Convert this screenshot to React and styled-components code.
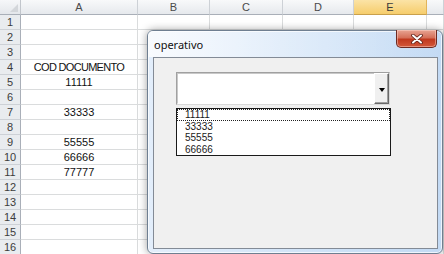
import React from "react";
import styled, { createGlobalStyle } from "styled-components";

const GlobalStyle = createGlobalStyle`
  html, body {
    margin: 0;
    padding: 0;
    background: #fff;
    overflow: hidden;
  }
  * { box-sizing: border-box; }
`;

const Page = styled.div`
  position: relative;
  width: 444px;
  height: 254px;
  overflow: hidden;
  font-family: "Liberation Sans", Arial, sans-serif;
`;

const Sheet = styled.div`
  display: grid;
  grid-template-columns: 21px 117px 72px 73px 71px 73px 1fr;
  grid-auto-rows: 15px;
  width: 444px;
`;

const Corner = styled.div`
  position: relative;
  background: linear-gradient(#f6f7f9, #e4e7eb);
  border-right: 1px solid #c2c6cc;
  border-bottom: 1px solid #a9afb8;
  &::after {
    content: "";
    position: absolute;
    right: 2px;
    bottom: 2px;
    border-left: 8px solid transparent;
    border-bottom: 8px solid #d3d6da;
  }
`;

const ColHead = styled.div`
  display: flex;
  align-items: center;
  justify-content: center;
  font-size: 11px;
  color: ${(p) => (p.$selected ? "#3b3b3b" : "#4a4a4a")};
  background: ${(p) =>
    p.$selected
      ? "linear-gradient(#fbe3a6, #f6cd6c)"
      : "linear-gradient(#f8f9fa, #e6e9ed)"};
  border-right: 1px solid ${(p) => (p.$selected ? "#e1b45a" : "#cdd1d6")};
  border-bottom: 1px solid ${(p) => (p.$selected ? "#c9a04c" : "#a9afb8")};
`;

const RowHead = styled.div`
  display: flex;
  align-items: center;
  justify-content: center;
  font-size: 11px;
  color: #3c3c3c;
  background: #e9ecef;
  border-right: 1px solid #a9afb8;
  border-bottom: 1px solid #cdd1d6;
`;

const Cell = styled.div`
  display: flex;
  align-items: center;
  justify-content: center;
  font-size: 11px;
  letter-spacing: ${(p) => (p.$label ? "-0.7px" : "0")};
  color: #111;
  white-space: nowrap;
  background: #fff;
  border-right: 1px solid #dadcdd;
  border-bottom: 1px solid #dadcdd;
`;

const Dialog = styled.div`
  position: absolute;
  left: 147px;
  top: 30px;
  width: 296px;
  height: 224px;
  display: flex;
  flex-direction: column;
  border: 1px solid #6f7f91;
  border-radius: 6px;
  background: linear-gradient(90deg, #e3eefb 0%, #cfe2f7 60%, #c3daf4 100%);
  box-shadow: 0 0 9px rgba(0, 0, 0, 0.38), inset 0 0 0 1px rgba(255, 255, 255, 0.7);
`;

const TitleBar = styled.div`
  position: relative;
  height: 26px;
  display: flex;
  align-items: center;
  padding-left: 6px;
  font-family: "Noto Sans", "Liberation Sans", sans-serif;
  font-size: 11px;
  color: #111;
  background: linear-gradient(90deg, rgba(255,255,255,0.75) 0%, rgba(255,255,255,0.35) 45%, rgba(255,255,255,0) 100%);
  border-radius: 5px 5px 0 0;
`;

const CloseButton = styled.div`
  position: absolute;
  top: -1px;
  right: 5px;
  width: 41px;
  height: 18px;
  display: flex;
  align-items: center;
  justify-content: center;
  border: 1px solid #6d2a22;
  border-top: none;
  border-radius: 0 0 5px 5px;
  background: linear-gradient(#e8a493 0%, #d5705a 45%, #c0391f 55%, #d3583a 100%);
  box-shadow: inset 0 0 0 1px rgba(255, 220, 210, 0.45);
`;

const Client = styled.div`
  flex: 1;
  margin: 0 4px 4px 5px;
  padding: 14px 0 0 22px;
  background: #f0f0f0;
  border: 1px solid #838b96;
`;

const Combo = styled.div`
  display: flex;
  width: 214px;
  height: 33px;
  background: #fff;
  border: 1px solid #a0a0a0;
  border-right-color: #d8d8d8;
  border-bottom-color: #d8d8d8;
`;

const ComboText = styled.div`
  flex: 1;
  border: 1px solid #c8c8c8;
  border-right: none;
  border-bottom-color: #fff;
`;

const ComboButton = styled.div`
  width: 15px;
  display: flex;
  align-items: center;
  justify-content: center;
  background: #f0f0f0;
  border: 1px solid #fff;
  border-right-color: #696969;
  border-bottom-color: #696969;
  box-shadow: inset -1px -1px 0 #a0a0a0;
`;

const Arrow = styled.span`
  display: block;
  width: 0;
  height: 0;
  margin-top: 2px;
  border-left: 3px solid transparent;
  border-right: 3px solid transparent;
  border-top: 4px solid #000;
`;

const List = styled.div`
  margin-top: 3px;
  width: 215px;
  height: 48px;
  background: #fff;
  border: 1px solid #1a1a1a;
  display: flex;
  flex-direction: column;
`;

const Item = styled.div`
  height: 11.5px;
  line-height: 11.5px;
  padding-left: 8px;
  font-family: "Liberation Sans", Arial, sans-serif;
  font-size: 10px;
  color: #1a1a1a;
  outline: ${(p) => (p.$focused ? "1px dotted #222" : "none")};
  outline-offset: -1px;
`;

const columns = ["A", "B", "C", "D", "E", "F"];

const cellData = {
  4: "COD DOCUMENTO",
  5: "11111",
  7: "33333",
  9: "55555",
  10: "66666",
  11: "77777",
};

const listItems = ["11111", "33333", "55555", "66666"];

export default function App() {
  const rows = Array.from({ length: 16 }, (_, i) => i + 1);

  return (
    <Page>
      <GlobalStyle />
      <Sheet>
        <Corner />
        {columns.map((c) => (
          <ColHead key={c} $selected={c === "E"}>
            {c !== "F" ? c : ""}
          </ColHead>
        ))}
        {rows.map((r) => (
          <React.Fragment key={r}>
            <RowHead>{r}</RowHead>
            {columns.map((c) => (
              <Cell key={c} $label={c === "A" && r === 4}>
                {c === "A" ? cellData[r] || "" : ""}
              </Cell>
            ))}
          </React.Fragment>
        ))}
      </Sheet>

      <Dialog>
        <TitleBar>
          operativo
          <CloseButton>
            <svg width="12" height="10" viewBox="0 0 12 10">
              <path
                d="M2 1.5 L10 8.5 M10 1.5 L2 8.5"
                stroke="#5a1e16"
                strokeWidth="3.6"
                strokeLinecap="round"
              />
              <path
                d="M2 1.5 L10 8.5 M10 1.5 L2 8.5"
                stroke="#fff"
                strokeWidth="2"
                strokeLinecap="round"
              />
            </svg>
          </CloseButton>
        </TitleBar>
        <Client>
          <Combo>
            <ComboText />
            <ComboButton>
              <Arrow />
            </ComboButton>
          </Combo>
          <List>
            {listItems.map((item, i) => (
              <Item key={item} $focused={i === 0}>
                {item}
              </Item>
            ))}
          </List>
        </Client>
      </Dialog>
    </Page>
  );
}
